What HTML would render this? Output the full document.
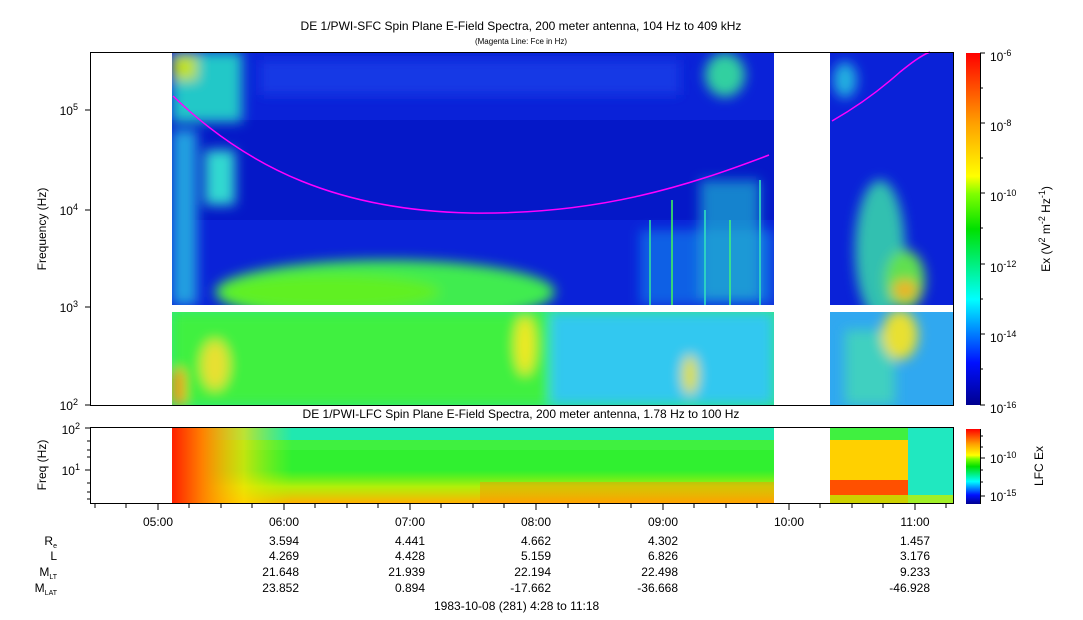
<!DOCTYPE html>
<html><head><meta charset="utf-8"><style>
html,body{margin:0;padding:0;background:#fff;}
svg{display:block;font-family:"Liberation Sans",sans-serif;}
</style></head><body>
<svg width="1083" height="620" viewBox="0 0 1083 620" xmlns="http://www.w3.org/2000/svg">
<defs>
<filter id="b" x="-20%" y="-20%" width="140%" height="140%"><feGaussianBlur stdDeviation="6"/></filter>
<filter id="b2"><feGaussianBlur stdDeviation="2"/></filter>
<clipPath id="c1"><rect x="172" y="52" width="602" height="253"/></clipPath>
<clipPath id="c2"><rect x="172" y="312" width="602" height="93"/></clipPath>
<clipPath id="c3"><rect x="830" y="52" width="123" height="253"/></clipPath>
<clipPath id="c4"><rect x="830" y="312" width="123" height="93"/></clipPath>
<clipPath id="c5"><rect x="172" y="428" width="602" height="75"/></clipPath>
<clipPath id="c6"><rect x="830" y="428" width="123" height="75"/></clipPath>
<linearGradient id="cb" x1="0" y1="1" x2="0" y2="0">
<stop offset="0" stop-color="#00008f"/><stop offset="0.12" stop-color="#0010ff"/><stop offset="0.3" stop-color="#00ffff"/><stop offset="0.5" stop-color="#00e000"/><stop offset="0.6" stop-color="#80ff00"/><stop offset="0.65" stop-color="#ffff00"/><stop offset="0.8" stop-color="#ffa000"/><stop offset="1" stop-color="#ff0000"/></linearGradient>
<linearGradient id="lfl" x1="0" y1="0" x2="1" y2="0">
<stop offset="0" stop-color="#ff2000"/><stop offset="0.25" stop-color="#ff8000"/><stop offset="0.6" stop-color="#ffe000" stop-opacity="0.7"/><stop offset="1" stop-color="#c0f000" stop-opacity="0"/></linearGradient>
<linearGradient id="lfb" x1="0" y1="0" x2="0" y2="1">
<stop offset="0" stop-color="#a0f000" stop-opacity="0"/><stop offset="0.5" stop-color="#d0f000" stop-opacity="0.8"/><stop offset="1" stop-color="#ffb000"/></linearGradient>
</defs>
<text x="521" y="30" font-size="12" text-anchor="middle">DE 1/PWI-SFC  Spin Plane E-Field Spectra, 200 meter antenna, 104 Hz to 409 kHz</text>
<text x="521" y="44" font-size="8" text-anchor="middle">(Magenta Line: Fce in Hz)</text>
<text x="521" y="418" font-size="12" text-anchor="middle">DE 1/PWI-LFC  Spin Plane E-Field Spectra, 200 meter antenna, 1.78 Hz to 100 Hz</text>

<g clip-path="url(#c1)">
<rect x="172" y="52" width="602" height="253" fill="#0a22d8"/>
<rect x="172" y="120" width="602" height="100" fill="#0518c8"/>
<g filter="url(#b)">
<rect x="172" y="52" width="70" height="70" fill="#20c8c8"/>
<rect x="172" y="130" width="25" height="175" fill="#20a0e0"/>
<rect x="205" y="150" width="30" height="55" fill="#30d8d0"/>
<rect x="172" y="55" width="25" height="25" fill="#c0e020"/>
<ellipse cx="385" cy="292" rx="170" ry="32" fill="#40ec50"/>
<ellipse cx="330" cy="292" rx="110" ry="18" fill="#60f020"/>
<rect x="260" y="60" width="420" height="35" fill="#1a40e8" opacity="0.8"/>
<ellipse cx="725" cy="75" rx="20" ry="22" fill="#30d0a0"/>
<rect x="640" y="230" width="134" height="75" fill="#1070e8" opacity="0.8"/>
<rect x="700" y="180" width="60" height="120" fill="#20b0d0" opacity="0.7"/>
</g>
<g stroke-width="2" opacity="0.8">
<line x1="650" y1="220" x2="650" y2="305" stroke="#30e0a0"/>
<line x1="672" y1="200" x2="672" y2="305" stroke="#40f060"/>
<line x1="705" y1="210" x2="705" y2="305" stroke="#30e0c0"/>
<line x1="730" y1="220" x2="730" y2="305" stroke="#40f080"/>
<line x1="760" y1="180" x2="760" y2="305" stroke="#30e0c0"/>
</g>
</g>
<g clip-path="url(#c2)">
<rect x="172" y="312" width="602" height="93" fill="#30e880"/>
<g filter="url(#b)">
<rect x="172" y="312" width="380" height="93" fill="#40f040"/>
<rect x="550" y="312" width="224" height="93" fill="#30c8f0"/>
<ellipse cx="525" cy="345" rx="10" ry="30" fill="#f0e820"/>
<ellipse cx="215" cy="365" rx="14" ry="25" fill="#e8e030"/>
<ellipse cx="690" cy="375" rx="8" ry="20" fill="#e0e020"/>
<rect x="172" y="370" width="12" height="35" fill="#ff9000"/>
</g>
</g>
<g clip-path="url(#c3)">
<rect x="830" y="52" width="123" height="253" fill="#0a22d8"/>
<g filter="url(#b)">
<ellipse cx="845" cy="80" rx="12" ry="18" fill="#20b0e0"/>
<ellipse cx="880" cy="250" rx="25" ry="70" fill="#30c0b0"/>
<ellipse cx="905" cy="280" rx="20" ry="30" fill="#60e050"/>
<ellipse cx="905" cy="290" rx="12" ry="10" fill="#f0b020"/>
</g>
</g>
<g clip-path="url(#c4)">
<rect x="830" y="312" width="123" height="93" fill="#30a8f0"/>
<g filter="url(#b)">
<rect x="845" y="330" width="50" height="75" fill="#40d0c0"/>
<ellipse cx="900" cy="335" rx="18" ry="25" fill="#e8e030"/>
</g>
</g>
<path d="M173,96 C250,170 340,210 470,213 C600,215 690,185 769,155" fill="none" stroke="#ff00ff" stroke-width="1.5"/>
<path d="M832,121 C860,105 880,90 900,72 C910,64 920,56 930,52" fill="none" stroke="#ff00ff" stroke-width="1.5"/>

<rect x="90.5" y="52.5" width="863" height="353" fill="none" stroke="#000"/>
<g stroke="#000">
<line x1="85" y1="110" x2="90" y2="110"/><line x1="85" y1="210" x2="90" y2="210"/><line x1="85" y1="307" x2="90" y2="307"/><line x1="85" y1="405" x2="90" y2="405"/>
</g>
<g font-size="12" text-anchor="end">
<text x="78" y="115">10<tspan font-size="9" dy="-5">5</tspan></text>
<text x="78" y="215">10<tspan font-size="9" dy="-5">4</tspan></text>
<text x="78" y="312">10<tspan font-size="9" dy="-5">3</tspan></text>
<text x="78" y="410">10<tspan font-size="9" dy="-5">2</tspan></text>
</g>
<text transform="translate(46,229) rotate(-90)" font-size="12" text-anchor="middle">Frequency (Hz)</text>

<rect x="966" y="53" width="14" height="352" fill="url(#cb)"/>
<g stroke="#000">
<line x1="980" y1="53" x2="985" y2="53"/><line x1="980" y1="88" x2="983" y2="88"/><line x1="980" y1="123" x2="985" y2="123"/><line x1="980" y1="158" x2="983" y2="158"/><line x1="980" y1="193" x2="985" y2="193"/><line x1="980" y1="228" x2="983" y2="228"/><line x1="980" y1="264" x2="985" y2="264"/><line x1="980" y1="299" x2="983" y2="299"/><line x1="980" y1="334" x2="985" y2="334"/><line x1="980" y1="369" x2="983" y2="369"/><line x1="980" y1="405" x2="985" y2="405"/>
<line x1="980.5" y1="53" x2="980.5" y2="405"/>
</g>
<g font-size="12">
<text x="990" y="61">10<tspan font-size="9" dy="-5">-6</tspan></text>
<text x="990" y="131">10<tspan font-size="9" dy="-5">-8</tspan></text>
<text x="990" y="201">10<tspan font-size="9" dy="-5">-10</tspan></text>
<text x="990" y="272">10<tspan font-size="9" dy="-5">-12</tspan></text>
<text x="990" y="342">10<tspan font-size="9" dy="-5">-14</tspan></text>
<text x="990" y="413">10<tspan font-size="9" dy="-5">-16</tspan></text>
</g>
<text transform="translate(1050,229) rotate(-90)" font-size="12" text-anchor="middle">Ex (V<tspan font-size="9" dy="-5">2</tspan><tspan dy="5"> m</tspan><tspan font-size="9" dy="-5">-2</tspan><tspan dy="5"> Hz</tspan><tspan font-size="9" dy="-5">-1</tspan><tspan dy="5">)</tspan></text>

<g clip-path="url(#c5)">
<rect x="172" y="428" width="602" height="75" fill="#30f030"/>
<rect x="172" y="428" width="602" height="13" fill="#20e8b0"/>
<rect x="172" y="440" width="602" height="10" fill="#40f040"/>
<rect x="172" y="470" width="602" height="33" fill="url(#lfb)"/>
<rect x="480" y="482" width="294" height="21" fill="#ff9000" opacity="0.45"/>
<rect x="172" y="428" width="120" height="75" fill="url(#lfl)"/>
</g>
<g clip-path="url(#c6)">
<rect x="830" y="428" width="123" height="75" fill="#20e8c0"/>
<rect x="830" y="428" width="78" height="75" fill="#ffd000"/>
<rect x="830" y="428" width="78" height="12" fill="#40f040"/>
<rect x="830" y="480" width="78" height="23" fill="#ff5000"/>
<rect x="830" y="495" width="123" height="8" fill="#c0f000" opacity="0.8"/>
</g>
<rect x="90.5" y="427.5" width="863" height="76" fill="none" stroke="#000"/>
<g stroke="#000">
<line x1="85" y1="428" x2="90" y2="428"/><line x1="85" y1="470" x2="90" y2="470"/>
<line x1="87" y1="441" x2="90" y2="441"/><line x1="87" y1="450" x2="90" y2="450"/><line x1="87" y1="457" x2="90" y2="457"/><line x1="87" y1="483" x2="90" y2="483"/><line x1="87" y1="492" x2="90" y2="492"/><line x1="87" y1="499" x2="90" y2="499"/>
</g>
<g font-size="12" text-anchor="end">
<text x="80" y="434">10<tspan font-size="9" dy="-5">2</tspan></text>
<text x="80" y="475">10<tspan font-size="9" dy="-5">1</tspan></text>
</g>
<text transform="translate(46,465) rotate(-90)" font-size="12" text-anchor="middle">Freq (Hz)</text>
<rect x="966" y="429" width="14" height="75" fill="url(#cb)"/>
<g stroke="#000"><line x1="980.5" y1="429" x2="980.5" y2="504"/><line x1="980" y1="458" x2="985" y2="458"/><line x1="980" y1="496" x2="985" y2="496"/><line x1="980" y1="436" x2="983" y2="436"/><line x1="980" y1="447" x2="983" y2="447"/><line x1="980" y1="470" x2="983" y2="470"/><line x1="980" y1="482" x2="983" y2="482"/></g>
<g font-size="12">
<text x="990" y="463">10<tspan font-size="9" dy="-5">-10</tspan></text>
<text x="990" y="501">10<tspan font-size="9" dy="-5">-15</tspan></text>
</g>
<text transform="translate(1043,466) rotate(-90)" font-size="12" text-anchor="middle">LFC Ex</text>

<g stroke="#000">
<line x1="95" y1="504" x2="95" y2="508"/><line x1="126" y1="504" x2="126" y2="508"/>
<line x1="158" y1="504" x2="158" y2="510"/><line x1="189" y1="504" x2="189" y2="508"/><line x1="221" y1="504" x2="221" y2="508"/><line x1="252" y1="504" x2="252" y2="508"/>
<line x1="284" y1="504" x2="284" y2="510"/><line x1="315" y1="504" x2="315" y2="508"/><line x1="347" y1="504" x2="347" y2="508"/><line x1="378" y1="504" x2="378" y2="508"/>
<line x1="410" y1="504" x2="410" y2="510"/><line x1="441" y1="504" x2="441" y2="508"/><line x1="473" y1="504" x2="473" y2="508"/><line x1="504" y1="504" x2="504" y2="508"/>
<line x1="536" y1="504" x2="536" y2="510"/><line x1="568" y1="504" x2="568" y2="508"/><line x1="599" y1="504" x2="599" y2="508"/><line x1="631" y1="504" x2="631" y2="508"/>
<line x1="663" y1="504" x2="663" y2="510"/><line x1="694" y1="504" x2="694" y2="508"/><line x1="726" y1="504" x2="726" y2="508"/><line x1="757" y1="504" x2="757" y2="508"/>
<line x1="789" y1="504" x2="789" y2="510"/><line x1="820" y1="504" x2="820" y2="508"/><line x1="852" y1="504" x2="852" y2="508"/><line x1="883" y1="504" x2="883" y2="508"/>
<line x1="915" y1="504" x2="915" y2="510"/><line x1="946" y1="504" x2="946" y2="508"/>
</g>
<g font-size="12" text-anchor="middle">
<text x="158" y="526">05:00</text><text x="284" y="526">06:00</text><text x="410" y="526">07:00</text><text x="536" y="526">08:00</text><text x="663" y="526">09:00</text><text x="789" y="526">10:00</text><text x="915" y="526">11:00</text>
</g>
<g font-size="12" text-anchor="end">
<text x="57" y="545">R<tspan font-size="7" dy="3">e</tspan></text>
<text x="57" y="560">L</text>
<text x="57" y="576">M<tspan font-size="7" dy="3">LT</tspan></text>
<text x="57" y="592">M<tspan font-size="7" dy="3">LAT</tspan></text>
<text x="299" y="545">3.594</text><text x="425" y="545">4.441</text><text x="551" y="545">4.662</text><text x="678" y="545">4.302</text><text x="930" y="545">1.457</text>
<text x="299" y="560">4.269</text><text x="425" y="560">4.428</text><text x="551" y="560">5.159</text><text x="678" y="560">6.826</text><text x="930" y="560">3.176</text>
<text x="299" y="576">21.648</text><text x="425" y="576">21.939</text><text x="551" y="576">22.194</text><text x="678" y="576">22.498</text><text x="930" y="576">9.233</text>
<text x="299" y="592">23.852</text><text x="425" y="592">0.894</text><text x="551" y="592">-17.662</text><text x="678" y="592">-36.668</text><text x="930" y="592">-46.928</text>
</g>
<text x="434" y="610" font-size="12">1983-10-08 (281) 4:28 to 11:18</text>
</svg>
</body></html>
